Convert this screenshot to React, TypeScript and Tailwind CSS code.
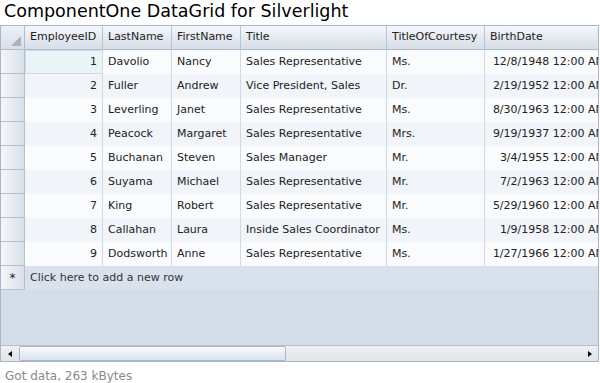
import React from "react";

type Emp = {
  id: number;
  last: string;
  first: string;
  title: string;
  courtesy: string;
  birth: string;
};

const employees: Emp[] = [
  { id: 1, last: "Davolio", first: "Nancy", title: "Sales Representative", courtesy: "Ms.", birth: "12/8/1948 12:00 AM" },
  { id: 2, last: "Fuller", first: "Andrew", title: "Vice President, Sales", courtesy: "Dr.", birth: "2/19/1952 12:00 AM" },
  { id: 3, last: "Leverling", first: "Janet", title: "Sales Representative", courtesy: "Ms.", birth: "8/30/1963 12:00 AM" },
  { id: 4, last: "Peacock", first: "Margaret", title: "Sales Representative", courtesy: "Mrs.", birth: "9/19/1937 12:00 AM" },
  { id: 5, last: "Buchanan", first: "Steven", title: "Sales Manager", courtesy: "Mr.", birth: "3/4/1955 12:00 AM" },
  { id: 6, last: "Suyama", first: "Michael", title: "Sales Representative", courtesy: "Mr.", birth: "7/2/1963 12:00 AM" },
  { id: 7, last: "King", first: "Robert", title: "Sales Representative", courtesy: "Mr.", birth: "5/29/1960 12:00 AM" },
  { id: 8, last: "Callahan", first: "Laura", title: "Inside Sales Coordinator", courtesy: "Ms.", birth: "1/9/1958 12:00 AM" },
  { id: 9, last: "Dodsworth", first: "Anne", title: "Sales Representative", courtesy: "Ms.", birth: "1/27/1966 12:00 AM" },
];

const cols = "grid grid-cols-[24px_78px_69px_69px_146px_98px_125px]";
const cell = "h-6 flex items-center border-r border-[#d0d8e2] px-[5px] whitespace-nowrap overflow-hidden";
const rowHead =
  "h-6 border-r border-b border-[#b4c0cd] bg-gradient-to-r from-[#f4f6f9] to-[#d9e0e9]";

export default function App() {
  return (
    <div className="w-[600px] h-[383px] bg-white text-[#222] font-['DejaVu_Sans',Verdana,sans-serif] text-[11px] overflow-hidden">
      <h1 className="h-[25px] pl-[4px] text-[17.5px] leading-[22px] text-black">
        ComponentOne DataGrid for Silverlight
      </h1>

      <div className="w-[599px] h-[337px] border border-[#a8b6c6] bg-[#d3dde8] flex flex-col overflow-hidden">
        <div className="flex-1 overflow-hidden">
          {/* header */}
          <div className={`${cols} h-6 bg-gradient-to-b from-[#f5f7fa] to-[#d6dee8] border-b border-[#b0bccb]`}>
            <div className="relative border-r border-[#b0bccb] bg-gradient-to-b from-[#eef1f5] to-[#d8dfe8]">
              <span className="absolute right-[3px] bottom-[3px] w-0 h-0 border-l-[10px] border-l-transparent border-b-[10px] border-b-[#a9b3bf]" />
            </div>
            {["EmployeeID", "LastName", "FirstName", "Title", "TitleOfCourtesy", "BirthDate"].map((h) => (
              <div key={h} className="flex items-center px-[5px] border-r border-[#b8c4d2] whitespace-nowrap overflow-hidden">
                {h}
              </div>
            ))}
          </div>

          {/* rows */}
          {employees.map((e, i) => (
            <div key={e.id} className={`${cols} ${i % 2 ? "bg-[#f1f4f8]" : "bg-[#fafbfd]"}`}>
              <div className={rowHead} />
              <div
                className={`${cell} justify-end ${
                  i === 0 ? "bg-[#e9f4f6] border border-[#9ed2dc]" : ""
                }`}
              >
                {e.id}
              </div>
              <div className={cell}>{e.last}</div>
              <div className={cell}>{e.first}</div>
              <div className={cell}>{e.title}</div>
              <div className={cell}>{e.courtesy}</div>
              <div className={`${cell} justify-end border-r-0`}>{e.birth}</div>
            </div>
          ))}

          {/* new row */}
          <div className="flex h-6 bg-[#d9e2ec]">
            <div className="w-6 border-r border-b border-[#b4c0cd] bg-gradient-to-r from-[#f4f6f9] to-[#d9e0e9] flex items-center justify-center text-[12px]">
              *
            </div>
            <div className="flex items-center pl-[5px] text-[#333]">Click here to add a new row</div>
          </div>
        </div>

        {/* horizontal scrollbar */}
        <div className="h-4 flex items-center border-t border-[#b3bfcc] bg-gradient-to-b from-[#eef0f2] to-[#e0e4e8]">
          <div className="w-[18px] flex justify-center">
            <span className="w-0 h-0 border-y-[3px] border-y-transparent border-r-[4px] border-r-black" />
          </div>
          <div className="w-[267px] h-[15px] rounded-[2px] border border-[#a9b7c6] bg-gradient-to-b from-[#f8fafc] to-[#d9e2ec]" />
          <div className="flex-1" />
          <div className="w-4 flex justify-center">
            <span className="w-0 h-0 border-y-[3px] border-y-transparent border-l-[4px] border-l-black" />
          </div>
        </div>
      </div>

      <p className="pl-[5px] pt-[5px] text-[12px] text-[#8a8a8a]">Got data, 263 kBytes</p>
    </div>
  );
}
